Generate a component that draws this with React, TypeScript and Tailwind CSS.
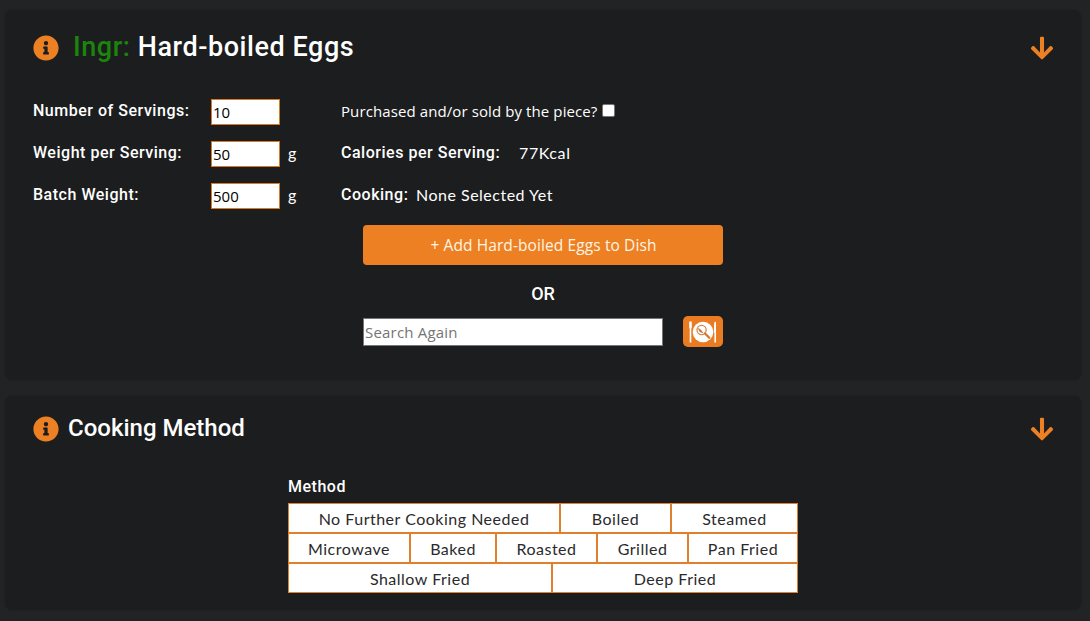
import { ReactNode } from "react";
import { FaArrowDown, FaInfoCircle } from "react-icons/fa";

const label = "font-['Roboto'] font-medium text-[16px] leading-[26px] tracking-[0.52px] whitespace-nowrap";
const body = "font-['Open_Sans'] whitespace-nowrap";
const lato = "font-['Lato'] text-[16px] whitespace-nowrap";

function Panel({ title, className, children }: { title: ReactNode; className: string; children: ReactNode }) {
  return (
    <section className={`rounded-[8px] bg-[#1c1d1e] shadow-[0_0_2px_#1b1c1d] ${className}`}>
      <header className="flex h-[36px] items-center pl-[28px] pr-[26px] text-[#ec8022]">
        <FaInfoCircle size={26} className="shrink-0" />
        <h2 className="flex-1 font-['Roboto'] font-medium whitespace-nowrap text-white">{title}</h2>
        <FaArrowDown size={26} className="shrink-0" />
      </header>
      {children}
    </section>
  );
}

function Field({ name, value, unit }: { name: string; value: string; unit?: string }) {
  return (
    <div className="flex h-[26px] items-start">
      <label className={`w-[178px] -mt-px ${label}`}>{name}</label>
      <input
        aria-label={name}
        defaultValue={value}
        className={`h-[26px] w-[69px] border border-[#d97920] bg-white pl-px text-[15px] text-black ${body}`}
      />
      {unit && <span className={`ml-[8px] -mt-px leading-[26px] ${lato}`}>{unit}</span>}
    </div>
  );
}

function SearchPlate() {
  return (
    <svg width="28" height="24" viewBox="0 0 28 24" fill="none">
      <circle cx="14" cy="12" r="10.3" fill="#fff" />
      <path d="M1.5 2v20.5M26.2 2v20.5" stroke="#fff" strokeWidth="1.6" />
      <path d="M.3 1.5v6.3c0 1 2.4 1 2.4 0V1.5M27 1.5c-1.7 1-2.2 5-2 11h2z" fill="#fff" />
      <circle cx="12.6" cy="10" r="4.6" stroke="#d9874a" strokeWidth="1.3" />
      <path d="M9.2 7.8c.1 3.6 2 5.6 5.3 5.1L11.9 9.8z" fill="#c47c48" />
      <path d="m16 13.4 4.3 4.4" stroke="#d5762c" strokeWidth="2.2" strokeLinecap="round" />
    </svg>
  );
}

const methods: { name: string; size: string }[][] = [
  [
    { name: "No Further Cooking Needed", size: "w-[272px]" },
    { name: "Boiled", size: "w-[111px]" },
    { name: "Steamed", size: "w-[127px]" },
  ],
  [
    { name: "Microwave", size: "w-[122px]" },
    { name: "Baked", size: "w-[86px]" },
    { name: "Roasted", size: "w-[101px]" },
    { name: "Grilled", size: "w-[91px]" },
    { name: "Pan Fried", size: "w-[110px]" },
  ],
  [
    { name: "Shallow Fried", size: "w-[264px]" },
    { name: "Deep Fried", size: "w-[246px]" },
  ],
];

export default function App() {
  return (
    <main className="flex h-[621px] w-[1090px] flex-col gap-[16px] overflow-hidden bg-[#222325] pl-[5px] pt-[10px] text-white">
      <Panel
        className="h-[370px] w-[1076px] pt-[20px]"
        title={
          <span className="relative -top-px ml-[14px] text-[27px] leading-[36px] tracking-[0.56px]">
            <span className="text-[#1b850b]">Ingr:</span> Hard-boiled Eggs
          </span>
        }
      >
        <div className="mt-[33px] flex pl-[28px]">
          <div className="flex w-[308px] flex-col gap-[16px]">
            <Field name="Number of Servings:" value="10" />
            <Field name="Weight per Serving:" value="50" unit="g" />
            <Field name="Batch Weight:" value="500" unit="g" />
          </div>
          <div className="flex flex-col gap-[16px]">
            <div className="flex h-[26px] items-start">
              <span className={`-mt-px text-[15px] leading-[26px] tracking-[0.1px] ${body}`}>
                Purchased and/or sold by the piece?
              </span>
              <input
                type="checkbox"
                aria-label="Purchased and/or sold by the piece"
                className="ml-[5px] mt-[5px] size-[13px] appearance-none rounded-[2px] border border-[#767676] bg-white"
              />
            </div>
            <div className="flex h-[26px] items-start">
              <span className={`-mt-px w-[178px] ${label}`}>Calories per Serving:</span>
              <span className={`-mt-px leading-[26px] tracking-[0.6px] ${lato}`}>77Kcal</span>
            </div>
            <div className="flex h-[26px] items-start">
              <span className={`-mt-px w-[75px] ${label}`}>Cooking:</span>
              <span className={`-mt-px leading-[26px] tracking-[0.5px] ${lato}`}>None Selected Yet</span>
            </div>
          </div>
        </div>
        <div className="ml-[358px] mt-[16px] flex w-[360px] flex-col items-center">
          <button className={`h-[40px] w-full rounded-[4px] bg-[#ec8022] pl-px pt-[2px] text-[15.5px] tracking-[0.1px] text-[#fff4e6] ${body}`}>
            + Add Hard-boiled Eggs to Dish
          </button>
          <p className="mt-[17px] font-['Roboto'] text-[18px] font-medium leading-[24px]">OR</p>
          <div className="mt-[10px] flex w-full items-center justify-between">
            <input
              aria-label="Search Again"
              placeholder="Search Again"
              className={`h-[28px] w-[300px] border border-[#767676] bg-white pl-px text-[15px] tracking-[0.2px] text-black placeholder:text-[#757575] ${body}`}
            />
            <button aria-label="Search" className="flex h-[31px] w-[40px] items-center justify-center rounded-[5px] bg-[#e97c22]">
              <SearchPlate />
            </button>
          </div>
        </div>
      </Panel>
      <Panel
        className="h-[214px] w-[1076px] pt-[15px]"
        title={<span className="relative -top-px ml-[9px] text-[24px] leading-[36px]">Cooking Method</span>}
      >
        <div className="ml-[283px] mt-[27px] w-[510px]">
          <h3 className={label}>Method</h3>
          <div className="mt-[3px]">
            {methods.map((row, i) => (
              <div key={i} className="flex">
                {row.map((m) => (
                  <button
                    key={m.name}
                    className={`h-[30px] border border-[#e0802c] bg-white pt-[2px] tracking-[0.5px] text-[#2a2a2c] ${lato} ${m.size}`}
                  >
                    {m.name}
                  </button>
                ))}
              </div>
            ))}
          </div>
        </div>
      </Panel>
    </main>
  );
}
